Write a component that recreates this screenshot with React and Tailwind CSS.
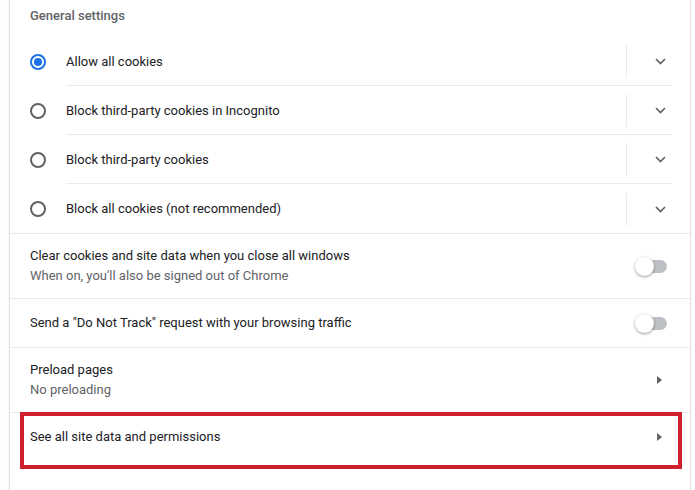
import React, { useState } from 'react';

const font = { fontFamily: 'Roboto, "Segoe UI", "Liberation Sans", sans-serif' };

const Radio = ({ checked }) => (
    <span className={`flex items-center justify-center w-4 h-4 rounded-full border-2 ${checked ? 'border-[#1a73e8]' : 'border-[#5f6368]'}`}>
        {checked && <span className="w-2 h-2 rounded-full bg-[#1a73e8]" />}
    </span>
);

const Chevron = () => (
    <svg width="11" height="7" viewBox="0 0 11 7" fill="none">
        <path d="M1 1l4.5 4.5L10 1" stroke="#5f6368" strokeWidth="1.7" />
    </svg>
);

const Arrow = () => (
    <svg width="5" height="8" viewBox="0 0 5 8">
        <path d="M0 0l5 4-5 4z" fill="#5f6368" />
    </svg>
);

const Toggle = () => (
    <div className="relative w-[34px] h-5 flex items-center">
        <div className="absolute left-[8px] w-[24px] h-[13px] rounded-full bg-[#bdc1c6]" />
        <div className="absolute left-0 w-[19px] h-[19px] rounded-full bg-white shadow-[0_1px_3px_rgba(0,0,0,0.4)]" />
    </div>
);

const options = [
    'Allow all cookies',
    'Block third-party cookies in Incognito',
    'Block third-party cookies',
    'Block all cookies (not recommended)',
];

export default function App() {
    const [selected, setSelected] = useState(0);

    return (
        <div className="w-[695px] h-[490px] bg-white overflow-hidden text-[13px] text-[#202124]" style={font}>
            <div className="ml-[9px] w-[682px] h-full border-x border-[#e3e3e3] shadow-[0_0_2px_rgba(0,0,0,0.08)]">
                <div className="h-[37px] pl-5 pt-[6px] text-[#5f6368] font-medium">General settings</div>

                {options.map((label, i) => (
                    <div key={label} className="flex items-center h-[49px] pl-5 cursor-pointer" onClick={() => setSelected(i)}>
                        <div className="w-9 flex items-center pt-[1px]">
                            <Radio checked={selected === i} />
                        </div>
                        <div className={`flex items-center h-full flex-1 mr-[18px] pt-[1px] ${i < 3 ? 'border-b border-[#e8eaed]' : ''}`}>
                            <span className="flex-1">{label}</span>
                            <div className="w-px h-[33px] bg-[#e8eaed]" />
                            <div className="w-[45px] flex justify-end pr-[6px]">
                                <Chevron />
                            </div>
                        </div>
                    </div>
                ))}

                <div className="flex items-center h-[65px] px-5 border-t border-[#e8eaed]">
                    <div className="flex-1 leading-5">
                        <div>Clear cookies and site data when you close all windows</div>
                        <div className="text-[#5f6368]">When on, you'll also be signed out of Chrome</div>
                    </div>
                    <div className="mr-[1px]"><Toggle /></div>
                </div>

                <div className="flex items-center h-[49px] px-5 border-t border-[#e8eaed]">
                    <div className="flex-1">Send a "Do Not Track" request with your browsing traffic</div>
                    <div className="mr-[1px]"><Toggle /></div>
                </div>

                <div className="flex items-center h-[65px] px-5 border-t border-[#e8eaed]">
                    <div className="flex-1 leading-5">
                        <div>Preload pages</div>
                        <div className="text-[#5f6368]">No preloading</div>
                    </div>
                    <div className="mr-[8px]"><Arrow /></div>
                </div>

                <div className="border-t border-[#e8eaed] relative">
                    <div className="flex items-center h-[47px] px-5">
                        <div className="flex-1">See all site data and permissions</div>
                        <div className="mr-[8px]"><Arrow /></div>
                    </div>
                    <div className="absolute left-[10px] -top-px w-[662px] h-[57px] border-4 border-[#d0202e]" />
                </div>
            </div>
        </div>
    );
}
